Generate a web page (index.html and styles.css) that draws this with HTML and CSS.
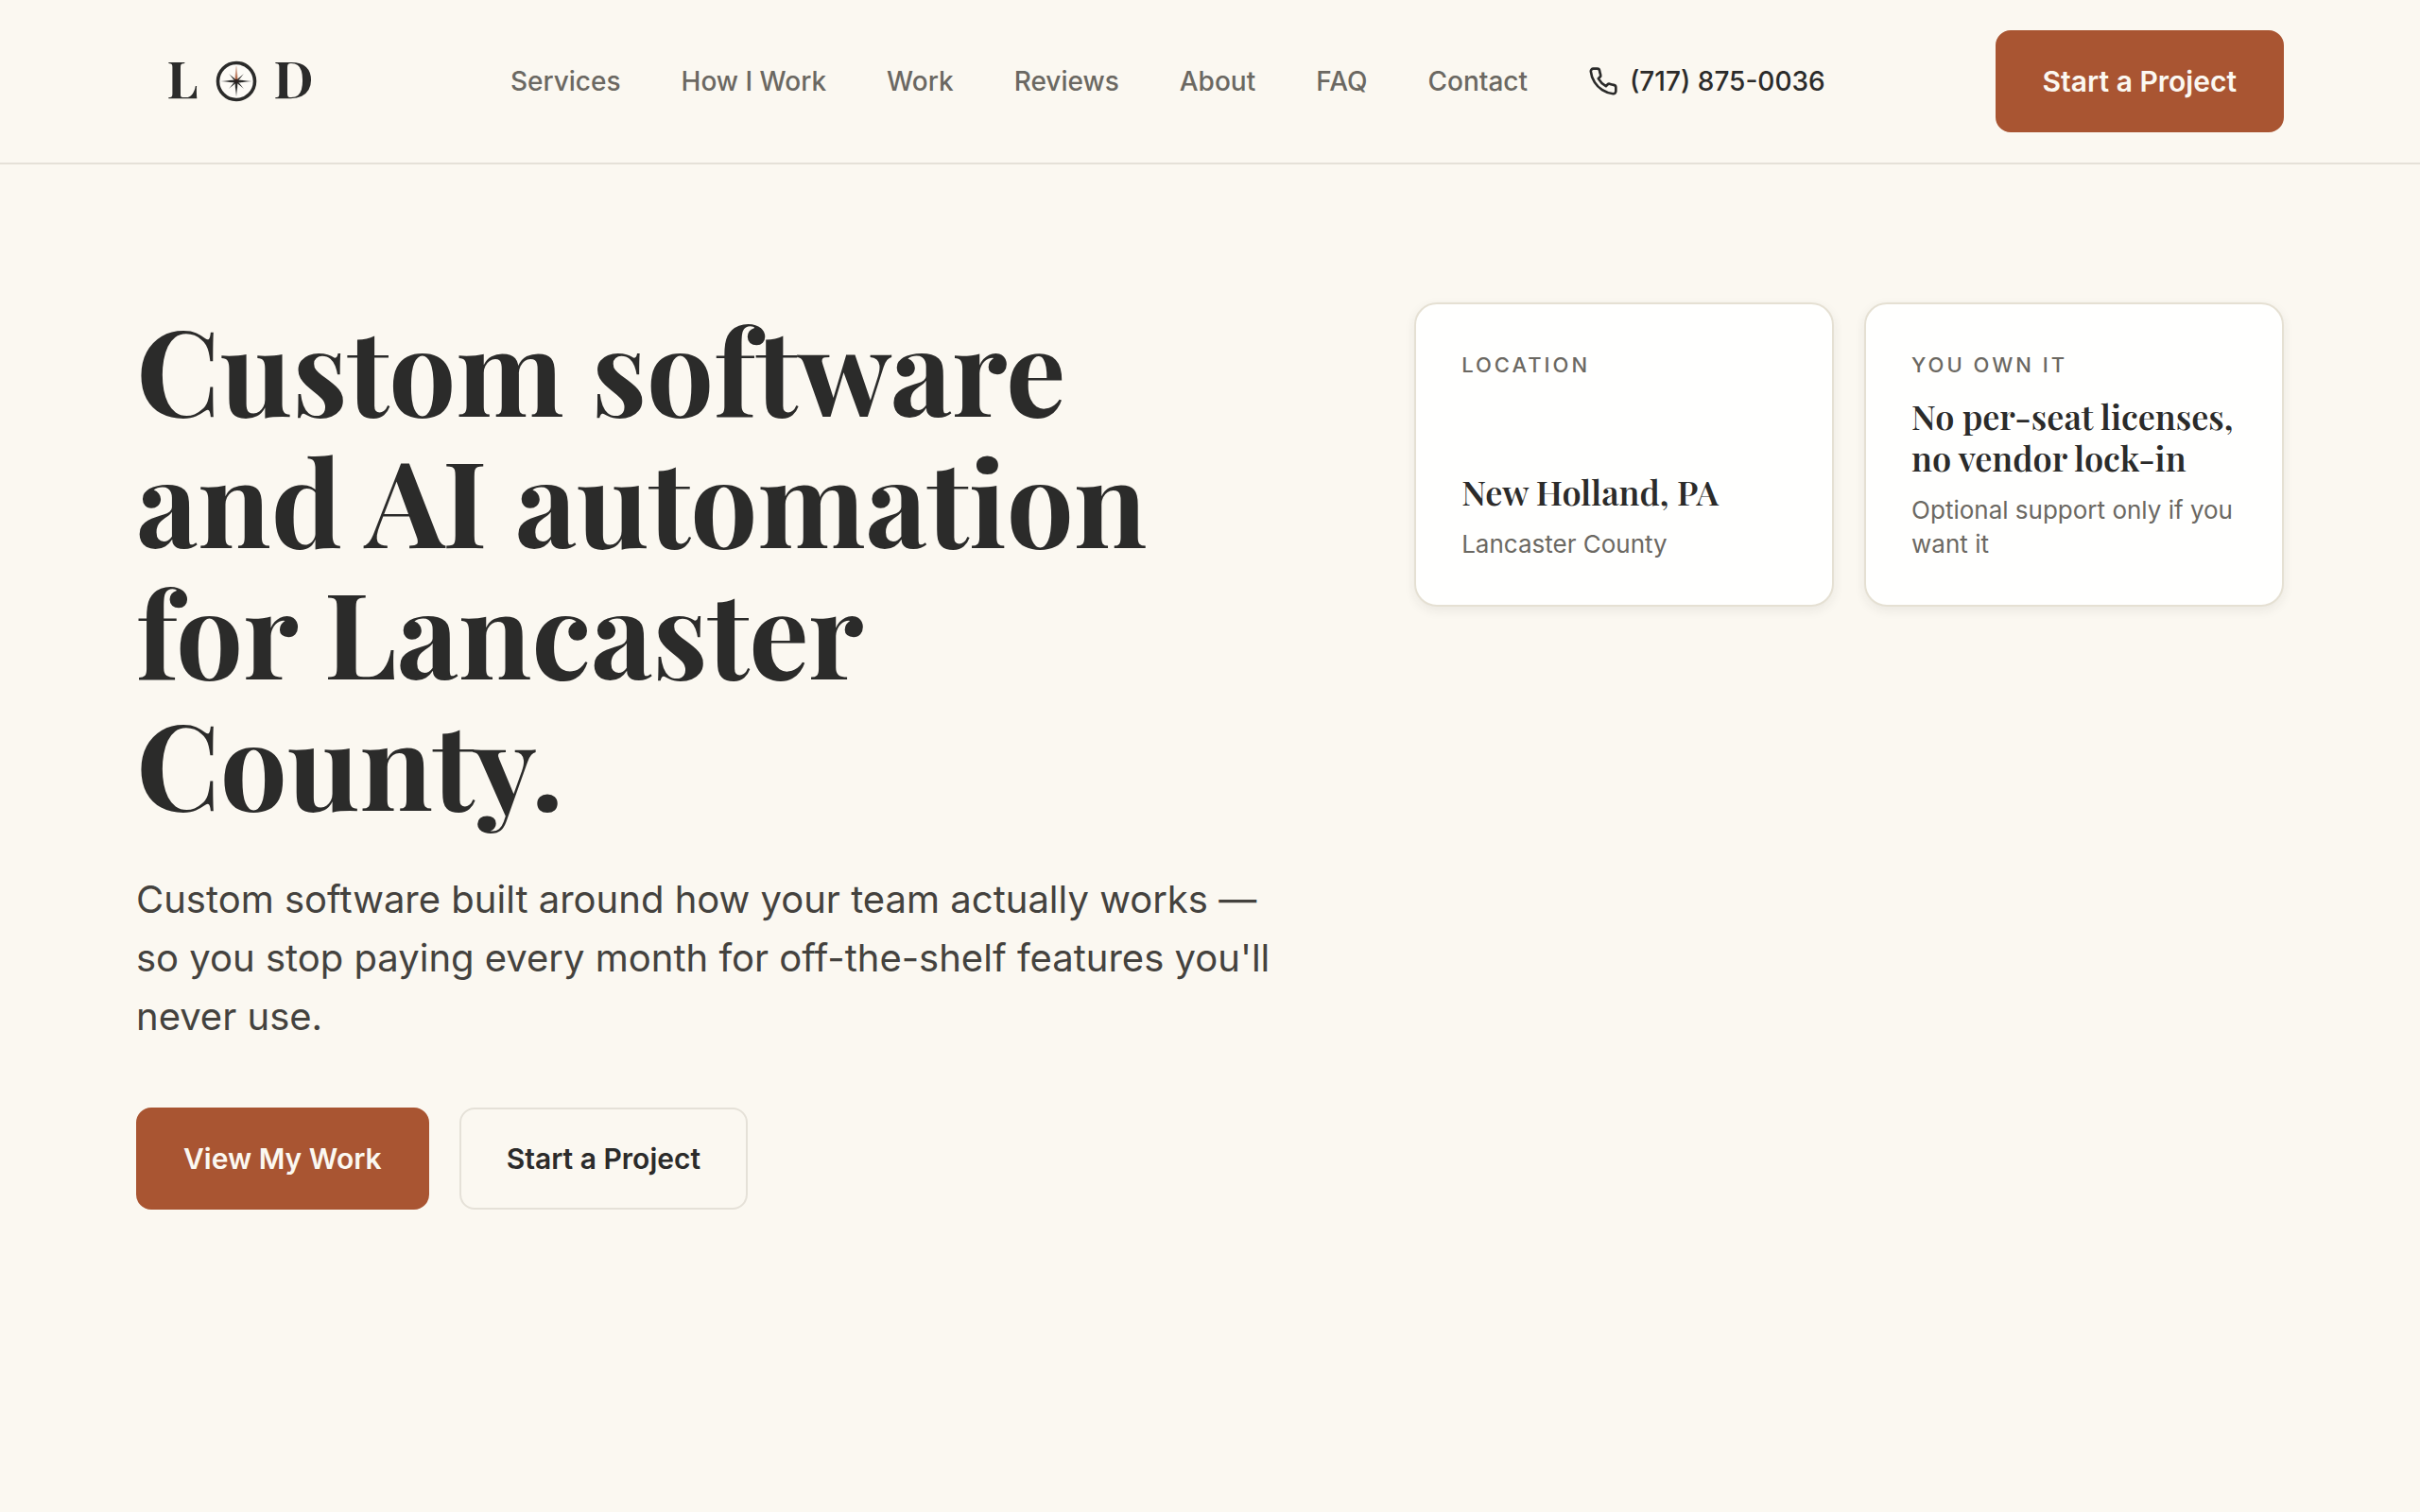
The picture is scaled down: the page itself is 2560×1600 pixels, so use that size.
FILE: index.html
```html
<!DOCTYPE html>
<html lang="en">
<head>
    <meta charset="UTF-8">
    <meta name="viewport" content="width=device-width, initial-scale=1.0">
    <title>LOD | Custom software and AI automation</title>
    <link rel="stylesheet" href="styles.css">
</head>
<body>
    <header class="header">
        <a class="logo" href="#" aria-label="Home">
            <span>L</span>
            <svg class="compass" viewBox="0 0 44 44">
                <defs>
                    <radialGradient id="dark" gradientUnits="userSpaceOnUse" cx="22" cy="22" r="16">
                        <stop offset="0" stop-color="#2b2b2a"/>
                        <stop offset="0.4" stop-color="#2b2b2a"/>
                        <stop offset="1" stop-color="#2b2b2a" stop-opacity="0.1"/>
                    </radialGradient>
                    <linearGradient id="north" x1="0" y1="1" x2="0" y2="0">
                        <stop offset="0" stop-color="#a85532"/>
                        <stop offset="1" stop-color="#a85532" stop-opacity="0.2"/>
                    </linearGradient>
                </defs>
                <circle cx="22" cy="22" r="19.5" fill="#fdfbf7" stroke="#2b2b2a" stroke-width="3.6"/>
                <path fill="url(#dark)" d="M21.4 38l-.9-16h3l-.9 16zM6 21.4l16-.9v3l-16-.9zM38 21.4l-16-.9v3l16-.9z"/>
                <path fill="url(#dark)" d="M14 14l8.8 7.2-1.6 1.6zM30 14l-8.8 7.2 1.6 1.6zM14 30l8.8-7.2-1.6-1.6zM30 30l-8.8-7.2 1.6-1.6z"/>
                <path fill="url(#north)" d="M20.5 21l.8-15h1.4l.8 15z"/>
                <circle cx="22" cy="22" r="2.2" fill="#2a2020"/>
            </svg>
            <span>D</span>
        </a>
        <nav class="nav">
            <a href="#services">Services</a>
            <a href="#how">How I Work</a>
            <a href="#work">Work</a>
            <a href="#reviews">Reviews</a>
            <a href="#about">About</a>
            <a href="#faq">FAQ</a>
            <a href="#contact">Contact</a>
            <a class="phone" href="tel:7178750036">
                <svg viewBox="0 0 24 24" fill="none" stroke="currentColor" stroke-width="2" stroke-linecap="round" stroke-linejoin="round">
                    <path d="M22 16.92v3a2 2 0 0 1-2.18 2 19.79 19.79 0 0 1-8.63-3.07 19.5 19.5 0 0 1-6-6 19.79 19.79 0 0 1-3.07-8.67A2 2 0 0 1 4.11 2h3a2 2 0 0 1 2 1.72 12.84 12.84 0 0 0 .7 2.81 2 2 0 0 1-.45 2.11L8.09 9.91a16 16 0 0 0 6 6l1.27-1.27a2 2 0 0 1 2.11-.45 12.84 12.84 0 0 0 2.81.7A2 2 0 0 1 22 16.92z"/>
                </svg>
                (717) 875-0036
            </a>
        </nav>
        <a class="btn btn-primary" href="#contact">Start a Project</a>
    </header>

    <main class="hero">
        <section class="intro">
            <h1>Custom software and AI automation for Lancaster County.</h1>
            <p>Custom software built around how your team actually works — so you stop paying every month for off-the-shelf features you'll never use.</p>
            <div class="actions">
                <a class="btn btn-primary" href="#work">View My Work</a>
                <a class="btn btn-outline" href="#contact">Start a Project</a>
            </div>
        </section>
        <aside class="cards">
            <div class="card">
                <span class="label">Location</span>
                <div>
                    <h2>New Holland, PA</h2>
                    <p>Lancaster County</p>
                </div>
            </div>
            <div class="card">
                <span class="label">You own it</span>
                <div>
                    <h2>No per-seat licenses, no vendor lock-in</h2>
                    <p>Optional support only if you want it</p>
                </div>
            </div>
        </aside>
    </main>
</body>
</html>
```

FILE: styles.css
```css
* {
    box-sizing: border-box;
    margin: 0;
    padding: 0;
}

body {
    background-color: #fbf8f1;
    color: #2b2b2a;
    font-family: Inter, sans-serif;
}

a {
    color: inherit;
    text-decoration: none;
}

.header {
    display: flex;
    justify-content: space-between;
    align-items: center;
    padding: 32px 144px;
    border-bottom: 2px solid #e5e1d8;
}

.logo {
    width: 216px;
    display: flex;
    justify-content: center;
    align-items: center;
    gap: 18px;
    padding-left: 4px;
    font-family: "Playfair Display", "Liberation Serif", serif;
    font-size: 54px;
    line-height: 64px;
    font-weight: 700;
}

.logo span {
    padding-bottom: 8px;
}

.compass {
    width: 44px;
    height: 44px;
}

.nav {
    display: flex;
    align-items: center;
    gap: 64px;
    font-size: 28px;
    font-weight: 500;
    color: #6b6862;
}

.phone {
    display: flex;
    align-items: center;
    gap: 12px;
    color: #2b2b2a;
}

.phone svg {
    width: 32px;
    height: 32px;
}

.btn {
    padding: 34px 48px;
    border: 2px solid transparent;
    border-radius: 16px;
    font-size: 30px;
    line-height: 36px;
    font-weight: 600;
}

.btn-primary {
    background-color: #a95532;
    border-color: #a95532;
    color: #fbf8f1;
}

.btn-outline {
    border-color: #e5e1d8;
}

.hero {
    display: grid;
    grid-template-columns: repeat(12, 1fr);
    column-gap: 46px;
    align-items: start;
    padding: 146px 144px;
}

.intro {
    grid-column: span 7;
}

.intro h1 {
    max-width: 1152px;
    font-family: "Playfair Display", "Liberation Serif", serif;
    font-size: 126px;
    line-height: 139px;
    font-weight: 700;
}

.intro p {
    max-width: 1216px;
    margin-top: 45px;
    font-size: 40px;
    line-height: 62px;
    color: #44423e;
}

.actions {
    display: flex;
    gap: 32px;
    margin-top: 65px;
}

.cards {
    grid-column: span 5;
    display: grid;
    grid-template-columns: 1fr 1fr;
    gap: 32px;
}

.card {
    display: flex;
    flex-direction: column;
    justify-content: space-between;
    gap: 16px;
    padding: 48px 48px 46px;
    background-color: #fffffe;
    border: 2px solid #e5e0d3;
    border-radius: 24px;
    box-shadow: 0 4px 12px rgba(42, 42, 40, 0.08);
}

.label {
    font-size: 22px;
    line-height: 32px;
    font-weight: 500;
    letter-spacing: 3px;
    text-transform: uppercase;
    color: #6b6862;
}

.card h2 {
    font-family: "Playfair Display", "Liberation Serif", serif;
    font-size: 36px;
    line-height: 44px;
    font-weight: 600;
}

.card p {
    margin-top: 16px;
    font-size: 26px;
    line-height: 36px;
    color: #6b6862;
}
```
